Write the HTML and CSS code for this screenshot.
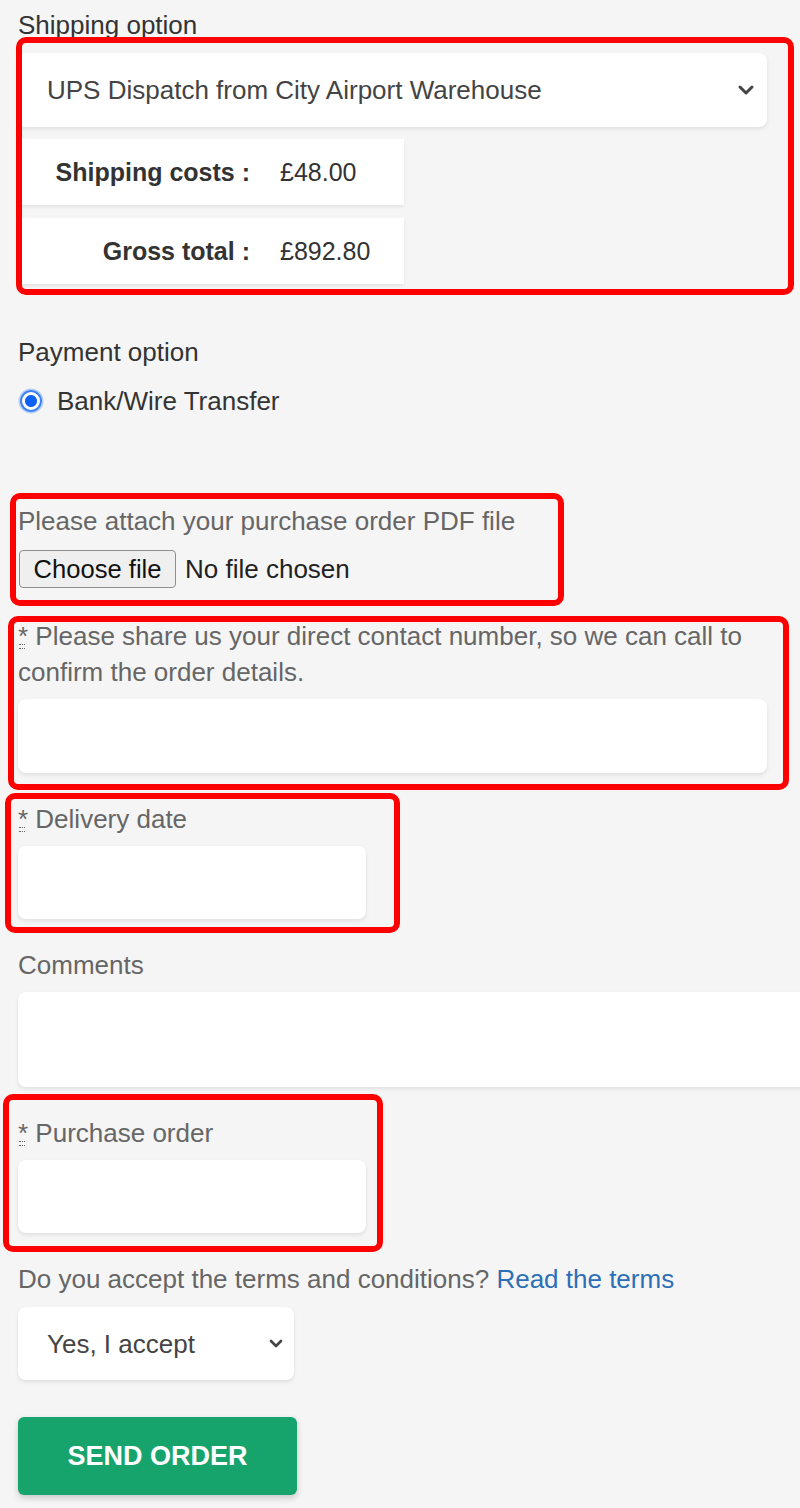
FILE: index.html
```html
<!DOCTYPE html>
<html lang="en">
<head>
<meta charset="utf-8">
<title>Order form</title>
<link rel="stylesheet" href="styles.css">
</head>
<body>
<form class="order">
  <div class="lbl dark first">Shipping option</div>
  <div class="select wide">
    <span>UPS Dispatch from City Airport Warehouse</span>
    <svg class="chev" width="18" height="12" viewBox="0 0 18 12"><path d="M3 3 L9 9 L15 3" fill="none" stroke="#444" stroke-width="3" stroke-linecap="round" stroke-linejoin="round"/></svg>
  </div>
  <div class="sumrow first-row"><span class="k">Shipping costs :</span><span class="v">£48.00</span></div>
  <div class="sumrow"><span class="k">Gross total :</span><span class="v">£892.80</span></div>

  <div class="lbl dark pay">Payment option</div>
  <label class="radio-row"><span class="radio"></span><span>Bank/Wire Transfer</span></label>

  <div class="lbl attach">Please attach your purchase order PDF file</div>
  <div class="file-row"><span class="file-btn">Choose file</span><span class="file-none">No file chosen</span></div>

  <div class="lbl field-lbl req contact">* Please share us your direct contact number, so we can call to confirm the order details.</div>
  <div class="input wide"></div>

  <div class="lbl field-lbl req">* Delivery date</div>
  <div class="input half"></div>

  <div class="lbl field-lbl">Comments</div>
  <div class="input textarea"></div>

  <div class="lbl field-lbl req">* Purchase order</div>
  <div class="input half"></div>

  <div class="lbl field-lbl">Do you accept the terms and conditions? <a class="link" href="#">Read the terms</a></div>
  <div class="select small">
    <span>Yes, I accept</span>
    <svg class="chev" width="16" height="11" viewBox="0 0 16 11"><path d="M3 3 L8 8 L13 3" fill="none" stroke="#444" stroke-width="2.6" stroke-linecap="round" stroke-linejoin="round"/></svg>
  </div>

  <div class="send">SEND ORDER</div>
</form>

<div class="mark m1"></div>
<div class="mark m2"></div>
<div class="mark m3"></div>
<div class="mark m4"></div>
<div class="mark m5"></div>
</body>
</html>
```

FILE: styles.css
```css
html, body {
  margin: 0;
  padding: 0;
  background: #f5f5f5;
}
body {
  font-family: "Liberation Sans", Arial, Helvetica, sans-serif;
  font-size: 26px;
  line-height: 36px;
  color: #666;
  width: 800px;
  height: 1508px;
  overflow: hidden;
  position: relative;
}
.order {
  display: flex;
  flex-direction: column;
  align-items: flex-start;
  padding: 7px 0 0 18px;
}
.lbl { color: #666; }
.lbl.dark { color: #333; }
.lbl.first { margin-bottom: 10px; }

.select {
  background: #fff;
  border-radius: 8px;
  box-shadow: 0 2px 4px rgba(0,0,0,0.09);
  height: 74px;
  box-sizing: border-box;
  display: flex;
  align-items: center;
  justify-content: space-between;
  padding: 0 12px 0 29px;
  color: #444;
}
.select.wide { width: 749px; }
.select.small { width: 276px; height: 73px; margin-top: 10px; padding-right: 10px; }

.sumrow {
  background: #fff;
  width: 386px;
  height: 66px;
  box-shadow: 0 2px 3px rgba(0,0,0,0.07);
  display: flex;
  align-items: center;
  color: #333;
  margin-top: 13px;
}
.sumrow.first-row { margin-top: 12px; }
.sumrow .k {
  width: 232px;
  text-align: right;
  font-weight: bold;
  font-size: 25px;
}
.sumrow .v {
  padding-left: 30px;
  font-size: 25px;
}

.lbl.pay { margin-top: 50px; }
.radio-row {
  display: flex;
  align-items: center;
  gap: 15px;
  color: #333;
  margin-top: 13px;
}
.radio {
  width: 22px;
  height: 22px;
  box-sizing: border-box;
  border-radius: 50%;
  border: 2px solid #3b82f6;
  background: radial-gradient(circle, #0b62f5 0 5.5px, #fff 6.5px);
  margin-left: 2px;
  box-shadow: 0 0 0 1.5px rgba(90,150,255,0.4);
}

.lbl.attach { margin-top: 84px; }
.file-row {
  display: flex;
  align-items: center;
  gap: 9px;
  margin-top: 11px;
  color: #222;
}
.file-btn {
  width: 157px;
  height: 38px;
  box-sizing: border-box;
  border: 1px solid #8e8e8e;
  border-radius: 4px;
  background: #efefef;
  display: flex;
  align-items: center;
  justify-content: center;
  color: #111;
  margin-left: 1px;
  font-size: 25.6px;
}

.field-lbl { margin-top: 28px; }
.field-lbl.contact { margin-top: 30px; width: 745px; }
.req {
  position: relative;
}
.req::after {
  content: "";
  position: absolute;
  left: 1px;
  top: 26px;
  width: 6px;
  height: 3px;
  border-top: 1px dotted #666;
  border-bottom: 1px dotted #666;
}

.input {
  background: #fff;
  border-radius: 8px;
  box-shadow: 0 2px 4px rgba(0,0,0,0.09);
  height: 74px;
  margin-top: 9px;
}
.input.wide { width: 749px; }
.input.half { width: 348px; height: 73px; }
.input.textarea { width: 800px; height: 95px; }

.link { color: #2c6fb7; text-decoration: none; }

.send {
  margin-top: 37px;
  width: 279px;
  height: 78px;
  border-radius: 6px;
  background: #17a46c;
  color: #fff;
  font-weight: bold;
  font-size: 27px;
  display: flex;
  align-items: center;
  justify-content: center;
  box-shadow: 0 3px 6px rgba(0,0,0,0.18);
}

.mark {
  position: absolute;
  border: 6px solid #ff0000;
  border-radius: 10px;
  box-sizing: border-box;
  pointer-events: none;
}
.m1 { left: 16px; top: 37px; width: 778px; height: 258px; }
.m2 { left: 10px; top: 493px; width: 554px; height: 113px; }
.m3 { left: 8px; top: 616px; width: 781px; height: 174px; }
.m4 { left: 5px; top: 793px; width: 395px; height: 140px; }
.m5 { left: 3px; top: 1094px; width: 380px; height: 158px; }
```
